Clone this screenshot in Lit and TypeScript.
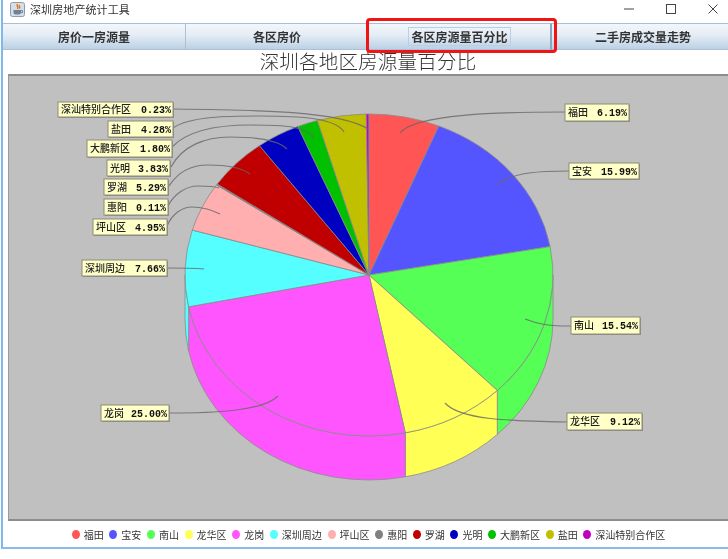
import { LitElement, html, css, svg } from "lit";
import { customElement } from "lit/decorators.js";

const CX = 369, CY = 275, RX = 184, RY = 161, DEPTH = 44;

interface Slice { name: string; pct: number; color: string; }
const slices: Slice[] = [
  { name: "福田", pct: 6.19, color: "#ff5555" },
  { name: "宝安", pct: 15.99, color: "#5555ff" },
  { name: "南山", pct: 15.54, color: "#55ff55" },
  { name: "龙华区", pct: 9.12, color: "#ffff55" },
  { name: "龙岗", pct: 25.0, color: "#ff55ff" },
  { name: "深圳周边", pct: 7.66, color: "#55ffff" },
  { name: "坪山区", pct: 4.95, color: "#ffafaf" },
  { name: "惠阳", pct: 0.11, color: "#808080" },
  { name: "罗湖", pct: 5.29, color: "#c00000" },
  { name: "光明", pct: 3.83, color: "#0000c0" },
  { name: "大鹏新区", pct: 1.8, color: "#00c000" },
  { name: "盐田", pct: 4.28, color: "#c0c000" },
  { name: "深汕特别合作区", pct: 0.23, color: "#c000c0" },
];

interface Callout { name: string; value: string; x: number; y: number; w: number; h: number; d: string; }
const callouts: Callout[] = [
  { name: "深汕特别合作区", value: "0.23%", x: 58, y: 102, w: 115, h: 15, d: "M173 109 C260 110 340 111 368 129" },
  { name: "盐田", value: "4.28%", x: 108, y: 121, w: 65, h: 16, d: "M173 128 C190 116 230 116 260 116 C300 116 336 118 344 132" },
  { name: "大鹏新区", value: "1.80%", x: 87, y: 140, w: 85, h: 17, d: "M172 147 C190 128 225 125 250 125 C285 125 305 126 314 138" },
  { name: "光明", value: "3.83%", x: 107, y: 160, w: 63, h: 16, d: "M171 167 C182 146 205 137 230 137 C258 137 278 140 287 149" },
  { name: "罗湖", value: "5.29%", x: 104, y: 179, w: 64, h: 16, d: "M169 186 C178 172 192 165 208 165 C228 165 242 168 250 174" },
  { name: "惠阳", value: "0.11%", x: 104, y: 199, w: 64, h: 16, d: "M168 206 C174 194 186 186 198 186 C206 186 214 186 219 188" },
  { name: "坪山区", value: "4.95%", x: 93, y: 219, w: 74, h: 16, d: "M167 226 C172 214 182 207 192 207 C202 207 212 210 220 214" },
  { name: "深圳周边", value: "7.66%", x: 82, y: 260, w: 85, h: 16, d: "M167 268 C180 268 192 268 204 269" },
  { name: "龙岗", value: "25.00%", x: 101, y: 405, w: 68, h: 16, d: "M169 413 C210 413 262 412 278 396" },
  { name: "福田", value: "6.19%", x: 565, y: 104, w: 64, h: 17, d: "M565 112 C500 112 415 114 400 133" },
  { name: "宝安", value: "15.99%", x: 569, y: 163, w: 70, h: 16, d: "M569 171 C540 171 515 172 497 184" },
  { name: "南山", value: "15.54%", x: 571, y: 317, w: 69, h: 17, d: "M571 326 C550 326 540 325 525 319" },
  { name: "龙华区", value: "9.12%", x: 567, y: 413, w: 75, h: 17, d: "M567 422 C510 421 460 420 445 403" },
];

const pt = (deg: number, dy = 0) => {
  const r = (deg * Math.PI) / 180;
  return [+(CX + RX * Math.sin(r)).toFixed(2), +(CY - RY * Math.cos(r) + dy).toFixed(2)];
};

function chart() {
  let acc = 0;
  const ranges = slices.map((s) => {
    const a = (acc / 100) * 360;
    acc += s.pct;
    return { s, a, b: (acc / 100) * 360 };
  });
  const sides = ranges.map(({ s, a, b }) => {
    const from = Math.max(a, 90), to = Math.min(b, 270);
    if (to <= from) return null;
    const [x1, y1] = pt(from), [x2, y2] = pt(to);
    const [x3, y3] = pt(to, DEPTH), [x4, y4] = pt(from, DEPTH);
    return svg`<path class="edge" fill=${s.color} d="M${x1} ${y1} A${RX} ${RY} 0 0 1 ${x2} ${y2} L${x3} ${y3} A${RX} ${RY} 0 0 0 ${x4} ${y4} Z"></path>`;
  });
  const tops = ranges.map(({ s, a, b }) => {
    const [x1, y1] = pt(a), [x2, y2] = pt(b);
    const large = b - a > 180 ? 1 : 0;
    return svg`<path class="edge" fill=${s.color} d="M${CX} ${CY} L${x1} ${y1} A${RX} ${RY} 0 ${large} 1 ${x2} ${y2} Z"></path>`;
  });
  const links = callouts.map((c) => svg`<path class="link" d=${c.d}></path>`);
  const labels = callouts.map(
    (c) => svg`
      <rect class="shadow" x=${c.x + 1} y=${c.y + 1} width=${c.w} height=${c.h}></rect>
      <rect class="box" x=${c.x} y=${c.y} width=${c.w} height=${c.h}></rect>
      <text class="name" x=${c.x + 3} y=${c.y + c.h / 2 + 3.5}>${c.name}</text>
      <text class="value" x=${c.x + c.w - 2} y=${c.y + c.h / 2 + 3.5}>${c.value}</text>`
  );
  return html`<svg class="pie" viewBox="8 76 720 445" width="720" height="445">
    ${sides}${tops}${links}${labels}
  </svg>`;
}

@customElement("app-root")
export class AppRoot extends LitElement {
  static styles = css`
    :host {
      display: block;
      position: relative;
      width: 728px;
      height: 559px;
      overflow: hidden;
      background: #fff;
      font-family: "Noto Sans CJK SC", "Liberation Sans", sans-serif;
    }
    .window {
      box-sizing: border-box;
      height: 549px;
      margin-left: 1px;
      border-left: 2px solid #7db8ee;
      border-bottom: 2px solid #86bdee;
      display: flex;
      flex-direction: column;
      filter: blur(0.35px);
    }
    .titlebar {
      height: 23px;
      flex: none;
      display: flex;
      align-items: flex-start;
      padding-left: 7px;
    }
    .app-icon { margin-top: 2px; flex: none; }
    .app-title {
      margin-left: 5px;
      margin-top: 1px;
      font-size: 11px;
      line-height: 17px;
      letter-spacing: 0.1px;
      color: #333;
      white-space: nowrap;
    }
    .controls {
      margin-left: auto;
      display: flex;
      gap: 32px;
      padding: 4px 10px 0 0;
    }
    .controls svg { display: block; }
    .tabs {
      flex: none;
      height: 27px;
      display: grid;
      grid-template-columns: repeat(4, 183px);
      overflow: hidden;
    }
    .tab {
      box-sizing: border-box;
      display: flex;
      align-items: center;
      justify-content: center;
      border: 1px solid #a9c0d6;
      border-left: none;
      background: linear-gradient(#f3f7fb 0%, #e4ecf5 45%, #bcd1e5 100%);
      font-size: 12px;
      font-weight: 700;
      color: #333;
      white-space: nowrap;
    }
    .tab.active { border-right: 2px solid #8ba6bf; }
    .tab.active span { outline: 1px solid #b9cfe4; padding: 1px 2px; line-height: 15px; }
    .heading {
      flex: none;
      height: 24px;
      padding-left: 5px;
      text-align: center;
      font-size: 19.5px;
      font-weight: 300;
      letter-spacing: 0.2px;
      line-height: 22px;
      color: #333;
      white-space: nowrap;
    }
    .plot {
      flex: 1;
      margin-left: 5px;
      background: #c0c0c0;
      border-top: 2px solid #8c8c8c;
      border-left: 1px solid #9a9a9a;
      border-bottom: 2px solid #8c8c8c;
      min-height: 0;
      overflow: hidden;
    }
    .pie { display: block; margin-left: -1px; }
    .edge { stroke: #8a8a8a; stroke-width: 0.8; stroke-linejoin: round; }
    .link { fill: none; stroke: #666; stroke-width: 1.2; stroke-opacity: 0.8; }
    .shadow { fill: #8f8f8f; }
    .box { fill: #ffffc8; stroke: #8c8c78; stroke-width: 1; }
    .name { font-size: 10px; font-weight: 500; fill: #222; }
    .value {
      font-family: "Liberation Mono", monospace;
      font-size: 10px;
      font-weight: 700;
      fill: #111;
      text-anchor: end;
    }
    .legend {
      flex: none;
      height: 26px;
      display: flex;
      align-items: center;
      justify-content: center;
      gap: 5.65px;
      font-size: 10px;
      color: #333;
      padding-left: 6px;
    }
    .item { display: flex; align-items: center; gap: 4px; white-space: nowrap; }
    .dot { width: 8px; height: 9px; border-radius: 50%; flex: none; }
    .marker {
      position: absolute;
      left: 366px;
      top: 18px;
      width: 191px;
      height: 35px;
      box-sizing: border-box;
      border: 3px solid #f01414;
      border-radius: 4px;
      pointer-events: none;
    }
  `;

  render() {
    const tabs = ["房价一房源量", "各区房价", "各区房源量百分比", "二手房成交量走势"];
    return html`
      <div class="window">
        <div class="titlebar">
          <svg class="app-icon" width="15" height="15" viewBox="0 0 15 15">
            <rect x="0.5" y="0.5" width="14" height="14" rx="2" fill="#d5dfe9" stroke="#8d9cab"></rect>
            <path d="M7.5 2 C6 4 9 5 7.5 7 M9.5 3 C8.5 4.5 10.5 5 9.5 6.5" fill="none" stroke="#e2701c" stroke-width="1.4"></path>
            <path d="M3.5 8 H11 V10.5 Q11 12.5 9 12.5 H5.5 Q3.5 12.5 3.5 10.5 Z" fill="#6f8296"></path>
            <path d="M11 8.6 H12.6 V10.6 H11" fill="none" stroke="#6f8296"></path>
          </svg>
          <span class="app-title">深圳房地产统计工具</span>
          <div class="controls">
            <svg width="10" height="10" viewBox="0 0 10 10"><path d="M0 5 H10" stroke="#444" stroke-width="1"></path></svg>
            <svg width="10" height="10" viewBox="0 0 10 10"><rect x="0.5" y="0.5" width="9" height="9" fill="none" stroke="#444"></rect></svg>
            <svg width="10" height="10" viewBox="0 0 10 10"><path d="M0.5 0.5 L9.5 9.5 M9.5 0.5 L0.5 9.5" stroke="#444" stroke-width="1"></path></svg>
          </div>
        </div>
        <div class="tabs">
          ${tabs.map((t, i) => html`<div class="tab ${i === 2 ? "active" : ""}"><span>${t}</span></div>`)}
        </div>
        <div class="heading">深圳各地区房源量百分比</div>
        <div class="plot">${chart()}</div>
        <div class="legend">
          ${slices.map(
            (s) => html`<div class="item"><i class="dot" style="background:${s.color}"></i>${s.name}</div>`
          )}
        </div>
      </div>
      <div class="marker"></div>
    `;
  }
}
